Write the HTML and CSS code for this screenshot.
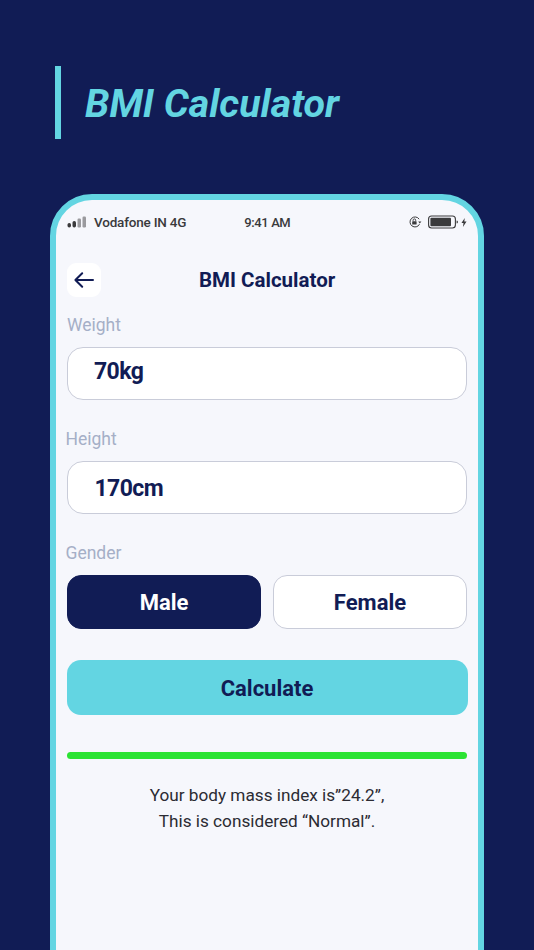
FILE: index.html
```html
<!DOCTYPE html>
<html lang="en">
<head>
    <meta charset="UTF-8">
    <meta name="viewport" content="width=device-width, initial-scale=1.0">
    <title>BMI Calculator</title>
    <link rel="stylesheet" href="styles.css">
</head>
<body>

<header class="promo-title">
    <h1>BMI Calculator</h1>
</header>

<div class="phone">
    <div class="status-bar">
        <div class="status-left">
            <svg class="signal" width="20" height="12" viewBox="0 0 20 12">
                <rect x="0.5" y="7" width="3.5" height="4.5" rx="1.7" fill="#3a3a3c"/>
                <rect x="5.5" y="5" width="3.5" height="6.5" rx="1.7" fill="#3a3a3c"/>
                <rect x="10.5" y="2.5" width="3.5" height="9" rx="1.2" fill="#9a9a9e"/>
                <rect x="15.5" y="0.5" width="3.5" height="11" rx="1.2" fill="#9a9a9e"/>
            </svg>
            <span class="carrier">Vodafone IN 4G</span>
        </div>
        <span class="clock">9:41 AM</span>
        <div class="status-right">
            <svg width="14" height="14" viewBox="0 0 14 14">
                <path d="M11.2 4.2A5 5 0 1 0 11.5 9.2" fill="none" stroke="#3a3a3c" stroke-width="1"/>
                <path d="M10.2 6.6h3.2l-1.6 2z" fill="#3a3a3c"/>
                <rect x="4.2" y="6.2" width="4.4" height="3.4" rx="0.6" fill="#3a3a3c"/>
                <path d="M5.1 6.2V5.2a1.3 1.3 0 0 1 2.6 0v1" fill="none" stroke="#3a3a3c" stroke-width="0.9"/>
            </svg>
            <svg class="battery" width="30" height="14" viewBox="0 0 30 14">
                <rect x="0.6" y="1" width="26.8" height="12" rx="3" fill="none" stroke="#3a3a3c" stroke-width="1.1"/>
                <rect x="2.4" y="2.8" width="20.6" height="8.4" rx="1" fill="#3a3a3c"/>
                <path d="M28.6 5.4l1.2.6v2l-1.2.6z" fill="#3a3a3c"/>
            </svg>
            <svg class="bolt" width="6" height="9" viewBox="0 0 7 11">
                <path d="M4.4 0L0.4 6.2h2.5L2.2 11l4.4-6.8H3.9z" fill="#3a3a3c"/>
            </svg>
        </div>
    </div>

    <div class="app-bar">
        <button class="back-btn" aria-label="Back">
            <svg width="22" height="18" viewBox="0 0 22 18">
                <path d="M20 9H2.4M9.2 2.2L2.4 9l6.8 6.8" fill="none" stroke="#111c55" stroke-width="2" stroke-linecap="round" stroke-linejoin="round"/>
            </svg>
        </button>
        <h2>BMI Calculator</h2>
    </div>

    <div class="field-label field-label-first">Weight</div>
    <div class="text-field text-field-first"><span>70kg</span></div>

    <div class="field-label field-label-shift">Height</div>
    <div class="text-field text-field-shift"><span>170cm</span></div>

    <div class="field-label field-label-shift">Gender</div>
    <div class="gender-row">
        <button class="gender-btn active">Male</button>
        <button class="gender-btn">Female</button>
    </div>

    <button class="calc-btn">Calculate</button>

    <div class="result-bar"></div>

    <p class="result-text">Your body mass index is”24.2”,<br>This is considered “Normal”.</p>
</div>

</body>
</html>
```

FILE: styles.css
```css
/* Base */
:root {
    --navy: #111c55;
    --cyan: #63d5e2;
    --screen: #f6f7fc;
    --line: #c9ccd9;
    --label: #a5afc7;
}

body {
    margin: 0;
    height: 950px;
    overflow: hidden;
    background-color: var(--navy);
    font-family: Roboto, "Liberation Sans", sans-serif;
}

button {
    font-family: inherit;
    cursor: pointer;
}

/* Promo heading */
.promo-title {
    height: 73px;
    margin: 66px 0 55px 55px;
    border-left: 6px solid var(--cyan);
    padding-left: 24px;
    display: flex;
    align-items: center;
}

.promo-title h1 {
    margin: 2px 0 0;
    font-size: 39.4px;
    font-weight: 700;
    font-style: italic;
    color: var(--cyan);
}

/* Phone frame */
.phone {
    box-sizing: border-box;
    width: 434px;
    height: 780px;
    margin-left: 50px;
    padding: 0 11px;
    border: 6px solid var(--cyan);
    border-radius: 42px 42px 0 0;
    background-color: var(--screen);
}

/* Status bar */
.status-bar {
    height: 44px;
    display: flex;
    align-items: center;
    color: #3a3a3c;
    font-size: 13.5px;
    font-weight: 500;
}

.status-left {
    display: flex;
    align-items: center;
    gap: 7px;
}

.carrier {
    letter-spacing: -0.2px;
}

.clock {
    margin-left: 58px;
    font-size: 13px;
    letter-spacing: -0.4px;
}

.status-right {
    margin-left: auto;
    display: flex;
    align-items: center;
    gap: 3px;
}

.status-right .battery {
    margin-left: 3px;
}

/* App bar */
.app-bar {
    height: 34px;
    margin-top: 19px;
    display: flex;
    align-items: center;
}

.back-btn {
    width: 34px;
    height: 34px;
    padding: 0;
    border: none;
    border-radius: 9px;
    background-color: #fff;
    display: flex;
    align-items: center;
    justify-content: center;
}

.app-bar h2 {
    margin: 0 0 0 98px;
    font-size: 20.5px;
    font-weight: 700;
    color: var(--navy);
}

/* Form fields */
.field-label {
    font-size: 17.5px;
    line-height: 22px;
    color: var(--label);
}

.field-label-first {
    margin-top: 17px;
}

.field-label-shift {
    margin-top: 28px;
    margin-left: -1.5px;
}

.text-field {
    box-sizing: border-box;
    height: 54px;
    margin-top: 11px;
    padding-left: 26px;
    border: 1px solid var(--line);
    border-radius: 16px;
    background-color: #fff;
    display: flex;
    align-items: center;
    font-size: 23px;
    letter-spacing: -0.6px;
    font-weight: 700;
    color: var(--navy);
}

.text-field-first {
    height: 53.5px;
    padding-bottom: 3px;
    margin-top: 10.5px;
}

.text-field-shift {
    height: 53px;
    padding-left: 26.5px;
    padding-top: 1px;
}

/* Gender */
.gender-row {
    display: flex;
    gap: 12px;
    margin-top: 10.5px;
}

.gender-btn {
    flex: 1;
    height: 54px;
    padding: 2px 0 0;
    border: 1px solid var(--line);
    border-radius: 14px;
    background-color: #fff;
    font-size: 22px;
    font-weight: 700;
    color: var(--navy);
}

.gender-btn.active {
    border-color: var(--navy);
    background-color: var(--navy);
    color: #fff;
}

/* Calculate + result */
.calc-btn {
    display: block;
    width: 401px;
    height: 55px;
    margin: 31px 0 0 -0.5px;
    padding: 2px 0 0;
    border: none;
    border-radius: 14px;
    background-color: var(--cyan);
    font-size: 22px;
    font-weight: 700;
    color: var(--navy);
}

.result-bar {
    height: 7px;
    margin-top: 37px;
    border-radius: 4px;
    background-color: #2be333;
}

.result-text {
    margin: 23px 0 0;
    text-align: center;
    font-size: 17.2px;
    line-height: 26px;
    color: #2b2b33;
}
```
